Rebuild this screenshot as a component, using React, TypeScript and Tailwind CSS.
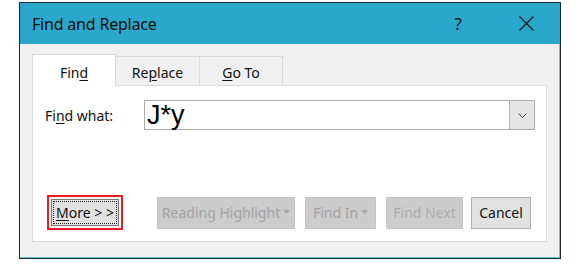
import React from "react";

const font = { fontFamily: '"Noto Sans", "Open Sans", sans-serif' };

function Caret() {
  return (
    <svg width="7" height="4" viewBox="0 0 7 4" className="ml-[3px] mt-[-2px]">
      <path d="M0 0 L7 0 L3.5 4 Z" fill="#a6a6a6" />
    </svg>
  );
}

export default function App() {
  return (
    <div className="w-[580px] h-[264px] bg-white pl-[19px] pt-[2px]" style={font}>
      <div className="w-[542px] h-[257px] border border-[#1c2a30] flex flex-col bg-[#f0f0f0]">
        {/* title bar */}
        <div className="h-[41px] bg-[#2aa8cc] flex items-center pl-[12px] pr-[26px] shrink-0">
          <span className="text-[16px] text-[#0a0a0a] tracking-[-0.2px]">Find and Replace</span>
          <span className="ml-auto text-[17px] text-[#111] mr-[57px]">?</span>
          <svg width="15" height="15" viewBox="0 0 15 15">
            <path d="M0.5 0.5 L14.5 14.5 M14.5 0.5 L0.5 14.5" stroke="#111" strokeWidth="1.1" />
          </svg>
        </div>
        {/* body */}
        <div className="flex-1 flex flex-col pl-[12px] pr-[12px] pt-[10px] pb-[15px] border-r border-b border-[#6cc3dc]">
          {/* tabs */}
          <div className="flex items-end h-[32px] relative z-10 text-[14px] text-[#111]">
            <div className="w-[84px] h-[32px] bg-white border border-b-0 border-[#d9d9d9] flex items-center justify-center pt-[3px]">
              Fin<span className="underline underline-offset-2">d</span>
            </div>
            <div className="w-[84px] h-[30px] border border-l-0 border-[#d9d9d9] border-b-0 flex items-center justify-center pt-[1px]">
              Re<span className="underline underline-offset-2">p</span>lace
            </div>
            <div className="w-[83px] h-[30px] border border-l-0 border-[#d9d9d9] border-b-0 flex items-center justify-center pt-[1px]">
              <span className="underline underline-offset-2">G</span>o To
            </div>
          </div>
          {/* panel */}
          <div className="flex-1 bg-white border border-[#d9d9d9] mt-[-1px] flex flex-col pl-[12px] pr-[11px] pt-[14px] pb-[12px]">
            <div className="flex items-center h-[30px]">
              <div className="w-[99px] text-[14px] text-[#111]">
                Fi<span className="underline underline-offset-2">n</span>d what:
              </div>
              <div className="flex-1 h-[30px] border border-[#acacac] flex">
                <div
                  className="flex-1 flex items-center pl-[2px] pt-[1px] text-[27px] leading-none text-black"
                  style={{ fontFamily: '"Liberation Sans", Arial, sans-serif' }}
                >
                  J*y
                </div>
                <div className="w-[25px] h-[28px] bg-[#e5e5e5] border-l border-[#acacac] flex items-center justify-center">
                  <svg width="9" height="5" viewBox="0 0 9 5">
                    <path d="M0.5 0.5 L4.5 4.5 L8.5 0.5" stroke="#444" strokeWidth="1" fill="none" />
                  </svg>
                </div>
              </div>
            </div>
            <div className="flex-1" />
            {/* buttons */}
            <div className="flex items-center h-[33px] text-[14px]">
              <div className="ml-[2px] border-2 border-[#ec1c24] p-[2px] bg-[#f4f4f4]">
                <div className="w-[68px] h-[27px] bg-[#e1e1e1] border border-[#7a7a7a] p-[1px]">
                  <div className="w-full h-full border border-dotted border-[#222] flex items-center justify-center text-[#111]">
                    <span className="underline underline-offset-2">M</span>ore &gt; &gt;
                  </div>
                </div>
              </div>
              <div className="ml-[34px] w-[138px] h-[32px] bg-[#cccccc] border border-[#c4c4c4] flex items-center justify-center text-[#a2a2a2]">
                Reading Highlight<Caret />
              </div>
              <div className="ml-[10px] w-[71px] h-[32px] bg-[#cccccc] border border-[#c4c4c4] flex items-center justify-center text-[#a2a2a2]">
                Find In<Caret />
              </div>
              <div className="ml-[10px] w-[77px] h-[32px] bg-[#cccccc] border border-[#c4c4c4] flex items-center justify-center text-[#ababab]">
                Find Next
              </div>
              <div className="ml-[8px] w-[60px] h-[32px] bg-[#e1e1e1] border border-[#adadad] flex items-center justify-center text-[#111]">
                Cancel
              </div>
            </div>
          </div>
        </div>
      </div>
    </div>
  );
}
